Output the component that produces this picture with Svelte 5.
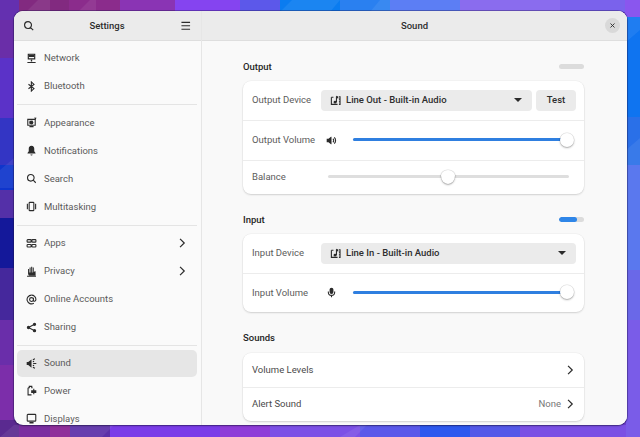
<script>
  const I = {
    search: [['M7 2.2a4.8 4.8 0 1 1 0 9.6a4.8 4.8 0 0 1 0-9.6zM10.5 10.5L14.2 14.2', 's']],
    menu: [['M2 3.2h12M2 8h12M2 12.8h12', 's']],
    network: [['M2.5 1h11v8.5h-11zM4.2 2.7v5.1h7.6V2.7z', 'f'], ['M4.2 2.7h7.6v3H4.2z', 'f'], ['M7 9.5h2v3H7zM2 13h12v1.6H2z', 'f']],
    bluetooth: [['M3.6 4.8L11.6 11L7.8 14.6V1.4L11.6 5L3.6 11.2', 's']],
    appearance: [['M2.6 3.5h10.8v8.5H2.6zM5 14h6', 's'], ['M5 5.5h5.5L5 10.5z', 'f'], ['M8 5.4a2.7 2.7 0 1 1 0 5.4a2.7 2.7 0 0 1 0-5.4z', 'f'], ['M12 0.6L15.4 1L13.6 4.2z', 'f']],
    bell: [['M8 1.2c2.8 0 4 2 4 4.4v3.4l1.8 2.6v.8H2.2v-.8L4 9V5.6C4 3.2 5.2 1.2 8 1.2zM6.4 13.8h3.2a1.6 1.6 0 0 1-3.2 0z', 'f']],
    multi: [['M5.6 2h4.8a1 1 0 0 1 1 1v10a1 1 0 0 1-1 1H5.6a1 1 0 0 1-1-1V3a1 1 0 0 1 1-1zM2 4v8M14 4v8', 's']],
    apps: [['M2.6 2.4h3.8a1 1 0 0 1 1 1v1.6a1 1 0 0 1-1 1H2.6a1 1 0 0 1-1-1V3.4a1 1 0 0 1 1-1zM9.6 2.4h3.8a1 1 0 0 1 1 1v1.6a1 1 0 0 1-1 1H9.6a1 1 0 0 1-1-1V3.4a1 1 0 0 1 1-1zM2.6 9.4h3.8a1 1 0 0 1 1 1v1.6a1 1 0 0 1-1 1H2.6a1 1 0 0 1-1-1v-1.6a1 1 0 0 1 1-1zM9.6 9.4h3.8a1 1 0 0 1 1 1v1.6a1 1 0 0 1-1 1H9.6a1 1 0 0 1-1-1v-1.6a1 1 0 0 1 1-1z', 's']],
    hand: [['M3 4.2h1.4v5.3h.8V2h1.5v7.5h.8V1h1.5v8.5h.8V2h1.5v7l1.4-1.4h1.2v1.2L14 14H4.2L3 11.5z', 'f'], ['M1.5 14.9h13', 's']],
    at: [['M8 1.6a6.4 6.4 0 1 0 3.4 11.8', 's'], ['M8 5.2a2.8 2.8 0 1 1 0 5.6a2.8 2.8 0 0 1 0-5.6zM10.8 5.5v3.6c0 2 3.6 2 3.6-1.1A6.4 6.4 0 0 0 8 1.6', 's']],
    share: [['M3.6 5.6a2.4 2.4 0 1 1 0 4.8a2.4 2.4 0 0 1 0-4.8zM12.4 1a2.4 2.4 0 1 1 0 4.8a2.4 2.4 0 0 1 0-4.8zM12.4 10.2a2.4 2.4 0 1 1 0 4.8a2.4 2.4 0 0 1 0-4.8z', 'f'], ['M3.6 8L12.4 3.4M3.6 8L12.4 12.6', 's']],
    sound: [['M1 5.8h2.2L8 2v12l-4.8-3.8H1z', 'f'], ['M10 2.4L13 1M10.4 8h4.6M10 13.6l3 1.4M10 5.4l1.8-.8M10 10.6l1.8.8', 's']],
    power: [['M3 4h1.8V2h3.6v2h1.2M3 4v10.4h5', 's'], ['M7.5 7.5h3V5.6h1.6v1.9H15v4h-2.9v1.9h-1.6v-1.9h-3z', 'f']],
    display: [['M2.8 2h10.4a1 1 0 0 1 1 1v7.8a1 1 0 0 1-1 1H2.8a1 1 0 0 1-1-1V3a1 1 0 0 1 1-1z', 's'], ['M5 13h6v2.4H5z', 'f']],
    music: [['M2 3.2V13.6H11M13 2.6H14.6V13.6H13M13 6H14.6M13 9.8H14.6', 's'], ['M2 3.2H5', 's'], ['M9 1v3.2L12 5V2zM7.4 8.4a2.2 2 0 1 1 0 4a2.2 2 0 0 1 0-4z', 'f'], ['M9.4 2v8.4', 's']],
    volume: [['M1 5.5h2.6L7.2 2.4h.8v11.2h-.8L3.6 10.5H1z', 'f'], ['M10 5.4a3.4 3.4 0 0 1 0 5.2M12 3.4a6.4 6.4 0 0 1 0 9.2', 's']],
    mic: [['M8 1a2.8 2.8 0 0 1 2.8 2.8v3.6a2.8 2.8 0 0 1-5.6 0V3.8A2.8 2.8 0 0 1 8 1z', 'f'], ['M3.4 6.6v1a4.6 4.6 0 0 0 9.2 0v-1M8 12.2v2.8', 's']],
    chevron: [['M5.4 2.4L11 8L5.4 13.6', 's']],
    close: [['M4.4 4.4L11.6 11.6M11.6 4.4L4.4 11.6', 's']],
  };

  const groups = [
    [['Network', 'network'], ['Bluetooth', 'bluetooth']],
    [['Appearance', 'appearance'], ['Notifications', 'bell'], ['Search', 'search'], ['Multitasking', 'multi']],
    [['Apps', 'apps', true], ['Privacy', 'hand', true], ['Online Accounts', 'at'], ['Sharing', 'share']],
    [['Sound', 'sound', false, true], ['Power', 'power'], ['Displays', 'display']],
  ];

  // backdrop: [x, y, w, h, colour] tiles and slanted facets of the wallpaper
  const tiles = [
    [0, 0, 640, 437, '#6d3fd0'],
    [0, 0, 19, 20, '#6430b0'], [19, 0, 50, 12, '#822a80'], [69, 0, 51, 12, '#8b2c8c'], [120, 0, 55, 12, '#8a34b4'],
    [175, 0, 65, 12, '#8544f0'], [240, 0, 40, 12, '#5c58ea'], [280, 0, 60, 12, '#0a7cf0'], [340, 0, 50, 12, '#2a80f0'],
    [390, 0, 70, 12, '#5c7ef4'], [460, 0, 100, 12, '#8a6cee'], [560, 0, 65, 12, '#7a62ec'], [625, 0, 15, 17, '#8a56ee'],
    [0, 20, 14, 38, '#6a2ea8'], [0, 58, 14, 60, '#5b32c8'], [0, 118, 14, 47, '#3335c4'], [0, 165, 14, 25, '#0f35cc'],
    [0, 190, 14, 28, '#5430a8'], [0, 218, 14, 50, '#14189a'], [0, 268, 14, 52, '#45289c'], [0, 320, 14, 45, '#6a2eaa'],
    [0, 365, 14, 55, '#7c2eaa'], [0, 420, 19, 17, '#5a2a90'],
    [626, 17, 14, 100, '#0f74f0'], [626, 117, 14, 48, '#2a70e8'], [626, 165, 14, 105, '#5a78ee'], [626, 270, 14, 50, '#6a68e8'], [626, 320, 14, 117, '#7a5ce8'],
    [19, 425, 31, 12, '#7a2ea0'], [50, 425, 20, 12, '#90309a'], [70, 425, 40, 12, '#5c30a8'], [110, 425, 110, 12, '#7a3ce8'],
    [220, 425, 50, 12, '#8f3cd8'], [270, 425, 90, 12, '#7c50e6'], [360, 425, 60, 12, '#5a58ea'], [420, 425, 50, 12, '#2c58ee'],
    [470, 425, 50, 12, '#5458e8'], [520, 425, 106, 12, '#7a50e4'],
  ];
  const facets = [
    '0,170 14,158 14,188 0,188', '626,150 640,138 640,165 626,165', '626,42 640,30 640,17 626,17',
    '26,12 38,0 50,0 50,12', '78,12 90,0 96,0 96,12', '280,12 292,0 340,0 330,12', '370,12 380,0 390,0 390,12',
    '102,437 114,425 70,425 70,437', '355,437 367,425 360,425 340,437', '0,437 14,425 19,425 19,437',
  ];
</script>

{#snippet icon(name, cls = 'ic')}
  <svg class={cls} viewBox="0 0 16 16" aria-hidden="true">
    {#each I[name] as [d, mode]}
      <path {d} class={mode === 'f' ? 'fill' : 'line'} />
    {/each}
  </svg>
{/snippet}

{#snippet slider(pos, fill, knobClass = '')}
  <div class="slider">
    <div class="track"></div>
    {#if fill}<div class="track on" style="width:{pos}"></div>{/if}
    <div class="knob {knobClass}" style="left:{pos}"></div>
  </div>
{/snippet}

<div class="desktop">
  <svg class="wall" viewBox="0 0 640 437" aria-hidden="true">
    {#each tiles as [x, y, w, h, c]}
      <rect {x} {y} width={w} height={h} fill={c} />
    {/each}
    {#each facets as points}
      <polygon {points} fill="#fff" opacity="0.07" />
    {/each}
  </svg>

  <div class="window">
    <aside class="sidebar">
      <header class="bar side-bar">
        {@render icon('search', 'ic hb')}
        <span class="title">Settings</span>
        {@render icon('menu', 'ic hb')}
      </header>
      <nav class="nav">
        {#each groups as group, i}
          {#if i > 0}<div class="sep"></div>{/if}
          {#each group as [label, ic, arrow, active]}
            <div class="item" class:active>
              {@render icon(ic)}
              <span class="lbl">{label}</span>
              {#if arrow}{@render icon('chevron', 'ic chev')}{/if}
            </div>
          {/each}
        {/each}
      </nav>
    </aside>

    <main class="main">
      <header class="bar main-bar">
        <span class="title">Sound</span>
        <button class="close" aria-label="Close">{@render icon('close', 'ic x')}</button>
      </header>
      <div class="content">
        <div class="head">
          <h2>Output</h2>
          <div class="level"></div>
        </div>
        <section class="card">
          <div class="row r39">
            <span class="key">Output Device</span>
            <div class="combo short">
              {@render icon('music')}
              <span class="val">Line Out - Built-in Audio</span>
              <span class="caret"></span>
            </div>
            <button class="btn">Test</button>
          </div>
          <div class="row r40">
            <span class="key">Output Volume</span>
            <span class="slot">{@render icon('volume')}</span>
            {@render slider('100%', true)}
          </div>
          <div class="row r34">
            <span class="key">Balance</span>
            <div class="bal">{@render slider('50%', false, 'mark')}</div>
          </div>
        </section>

        <div class="head gap">
          <h2>Input</h2>
          <div class="level"><div class="level-on"></div></div>
        </div>
        <section class="card">
          <div class="row r39">
            <span class="key">Input Device</span>
            <div class="combo">
              {@render icon('music')}
              <span class="val">Line In - Built-in Audio</span>
              <span class="caret"></span>
            </div>
          </div>
          <div class="row r39b">
            <span class="key">Input Volume</span>
            <span class="slot">{@render icon('mic')}</span>
            {@render slider('100%', true)}
          </div>
        </section>

        <div class="head gap">
          <h2>Sounds</h2>
        </div>
        <section class="card">
          <div class="row r34">
            <span class="key dark">Volume Levels</span>
            <span class="push"></span>
            {@render icon('chevron', 'ic chev')}
          </div>
          <div class="row r34">
            <span class="key dark">Alert Sound</span>
            <span class="push"></span>
            <span class="none">None</span>
            {@render icon('chevron', 'ic chev')}
          </div>
        </section>
      </div>
    </main>
  </div>
</div>

<style>
  :global(body) { margin: 0; }
  .desktop {
    position: relative;
    width: 640px;
    height: 437px;
    overflow: hidden;
    font: 400 9.5px/14px Roboto, "Noto Sans", sans-serif;
    color: #3a3a3a;
    padding: 11px 13px 12px 14px;
    box-sizing: border-box;
  }
  .wall { position: absolute; inset: 0; width: 640px; height: 437px; }
  .window {
    position: relative;
    display: flex;
    height: 414px;
    border-radius: 9px;
    overflow: hidden;
    background: #fafafa;
    box-shadow: 0 0 0 1px rgba(30, 20, 80, .35), 0 1px 2px rgba(0, 0, 0, .3);
  }
  .bar {
    display: flex;
    align-items: center;
    height: 30px;
    flex: none;
    background: #ebebeb;
    border-bottom: 1px solid #dedede;
    box-sizing: border-box;
  }
  .title { font-weight: 500; color: #2e2e2e; }
  .sidebar {
    width: 188px;
    flex: none;
    display: flex;
    flex-direction: column;
    border-right: 1px solid #e6e6e6;
    box-sizing: border-box;
  }
  .side-bar { justify-content: space-between; padding: 0 10px 0 9px; }
  .nav { padding: 3px 4px 0 3px; }
  .item {
    display: flex;
    align-items: center;
    height: 28px;
    padding: 0 9px 0 9px;
    gap: 7px;
    border-radius: 5px;
    color: #5a5a5a;
  }
  .item.active { background: #e6e6e6; height: 27px; margin-top: .5px; }
  .lbl { flex: 1; }
  .sep { height: 1px; margin: 4px 0 3.5px; background: #e4e4e4; }
  .ic { width: 11px; height: 11px; flex: none; color: #2b2b2b; }
  .hb { width: 11.5px; height: 11.5px; }
  .chev { width: 12px; height: 12px; }
  .fill { fill: currentColor; fill-rule: evenodd; }
  .line { fill: none; stroke: currentColor; stroke-width: 1.6; }
  .main {
    flex: 1;
    min-width: 0;
    display: flex;
    flex-direction: column;
    background: #f9f9f9;
  }
  .main-bar { justify-content: center; position: relative; }
  .close {
    position: absolute;
    right: 7px;
    top: 6.5px;
    width: 15px;
    height: 15px;
    padding: 0;
    border: 0;
    border-radius: 50%;
    background: #d9d9d9;
    display: flex;
    align-items: center;
    justify-content: center;
  }
  .x { width: 9px; height: 9px; }
  .content { padding: 18px 0 0 41px; width: 341px; box-sizing: content-box; }
  .head {
    display: flex;
    align-items: center;
    justify-content: space-between;
    height: 14px;
    margin-bottom: 8px;
  }
  .head.gap { margin-top: 18.5px; }
  h2 { margin: 0; font: 500 9.5px/14px Roboto, sans-serif; color: #262626; position: relative; top: .5px; }
  .level {
    width: 25px;
    height: 5px;
    border-radius: 3px;
    background: #dcdcdc;
    overflow: hidden;
  }
  .level-on { width: 18px; height: 5px; border-radius: 3px; background: #2f86e8; }
  .card {
    background: #fff;
    border-radius: 8px;
    box-shadow: 0 0 0 .5px rgba(0, 0, 0, .05), 0 1px 2px rgba(0, 0, 0, .14);
  }
  .row {
    display: flex;
    align-items: center;
    padding: 0 8px 0 9px;
    box-sizing: border-box;
  }
  .row + .row { border-top: 1px solid #ececec; }
  .r39 { height: 38.5px; }
  .r39b { height: 39.5px; }
  .r40 { height: 40px; }
  .r34 { height: 34px; }
  .key { width: 69px; flex: none; color: #5c5c5c; white-space: nowrap; }
  .key.dark { width: auto; color: #4a4a4a; }
  .push { flex: 1; }
  .none { color: #777; margin-right: 3px; }
  .combo {
    flex: 1;
    display: flex;
    align-items: center;
    height: 21px;
    background: #ebebeb;
    border-radius: 4px;
    padding: 0 9px 0 9px;
    gap: 5px;
  }
  .combo.short { margin-right: 4px; }
  .val { flex: 1; font-weight: 500; color: #2e2e2e; white-space: nowrap; }
  .caret {
    width: 0;
    height: 0;
    border: 4px solid transparent;
    border-top: 4.5px solid #2b2b2b;
    border-bottom: 0;
    margin-right: 1px;
  }
  .btn {
    width: 40px;
    height: 21px;
    padding: 0;
    border: 0;
    border-radius: 4px;
    background: #ebebeb;
    font: 500 9.5px/14px Roboto, sans-serif;
    color: #2e2e2e;
  }
  .slot {
    width: 32px;
    flex: none;
    margin-right: 0;
    display: flex;
    justify-content: flex-start;
    padding-left: 5px;
    box-sizing: border-box;
  }
  .slider {
    position: relative;
    flex: 1;
    height: 14px;
    margin-right: 9px;
    top: -.5px;
  }
  .track {
    position: absolute;
    left: 0;
    top: 5.5px;
    width: 100%;
    height: 3px;
    border-radius: 2px;
    background: #dedede;
  }
  .track.on { background: #2f7fe0; }
  .knob {
    position: absolute;
    top: 0;
    width: 14px;
    height: 14px;
    margin-left: -7px;
    border-radius: 50%;
    background: #fff;
    box-shadow: 0 0 0 .5px rgba(0, 0, 0, .12), 0 1px 2px rgba(0, 0, 0, .3);
  }
  .knob.mark { border-radius: 50% 50% 50% 50% / 40% 40% 60% 60%; margin-left: -8px; }
  .bal { flex: 1; display: flex; margin-left: 7px; }
  .bal .slider { margin-right: 7px; }
</style>
